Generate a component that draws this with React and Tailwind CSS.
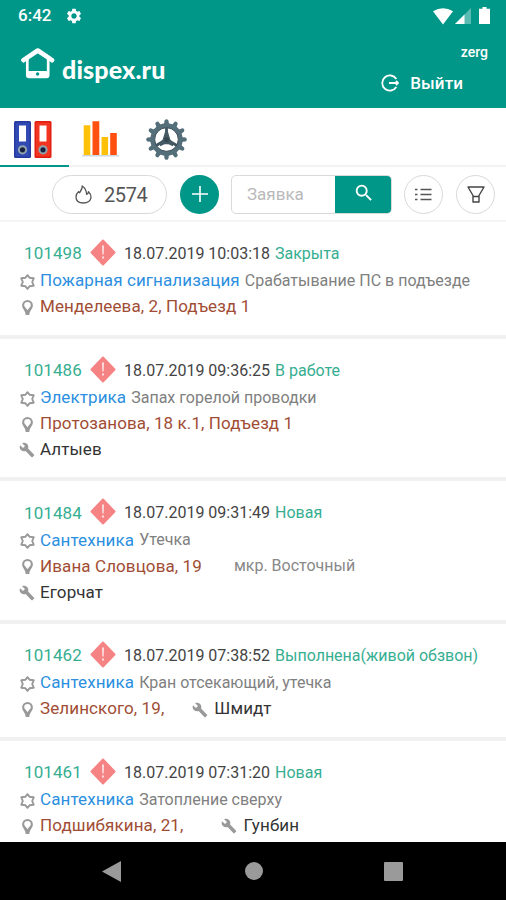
import { MdSettings, MdSearch, MdBuild } from "react-icons/md";

const requests = [
  {
    id: "101498",
    date: "18.07.2019 10:03:18",
    status: "Закрыта",
    type: "Пожарная сигнализация",
    text: "Срабатывание ПС в подъезде",
    address: "Менделеева, 2, Подъезд 1",
  },
  {
    id: "101486",
    date: "18.07.2019 09:36:25",
    status: "В работе",
    type: "Электрика",
    text: "Запах горелой проводки",
    address: "Протозанова, 18 к.1, Подъезд 1",
    worker: "Алтыев",
  },
  {
    id: "101484",
    date: "18.07.2019 09:31:49",
    status: "Новая",
    type: "Сантехника",
    text: "Утечка",
    address: "Ивана Словцова, 19",
    district: "мкр. Восточный",
    worker: "Егорчат",
  },
  {
    id: "101462",
    date: "18.07.2019 07:38:52",
    status: "Выполнена(живой обзвон)",
    type: "Сантехника",
    text: "Кран отсекающий, утечка",
    address: "Зелинского, 19,",
    inlineWorker: "Шмидт",
    gap: "ml-[28px]",
  },
  {
    id: "101461",
    date: "18.07.2019 07:31:20",
    status: "Новая",
    type: "Сантехника",
    text: "Затопление сверху",
    address: "Подшибякина, 21,",
    inlineWorker: "Гунбин",
    gap: "ml-[38px]",
  },
];

function StatusBar() {
  return (
    <div className="flex h-8 items-center pl-[18px] pr-[16px]">
      <span className="text-[17px] font-medium">6:42</span>
      <MdSettings className="ml-[14px] -mt-px size-[18px]" />
      <svg className="ml-auto h-[17px] w-[20px]" viewBox="0 0 20 17" fill="currentColor">
        <path d="M0 3.2Q10-2.6 20 3.2L10 16.5Z" />
      </svg>
      <svg className="ml-[2px] h-[16px] w-[16px]" viewBox="0 0 16 16">
        <path d="M16 0V16H0Z" fill="#fff" opacity=".35" />
        <path d="M9.5 6.5V16H0Z" fill="#fff" />
      </svg>
      <svg className="ml-[8px] -mt-px h-[17px] w-[11px]" viewBox="0 0 11 17" fill="currentColor">
        <path d="M3.5 0h4v1.7H11V17H0V1.7h3.5z" />
      </svg>
    </div>
  );
}

function Header() {
  return (
    <div className="flex grow justify-between pl-[21px] pr-[18px]">
      <div className="flex items-start pt-[15px]">
        <svg className="h-[32px] w-[34px]" viewBox="0 0 34 32" fill="none" stroke="#fff">
          <path d="M2.5 13.2 16.8 3.5 31 13.2" strokeWidth="4.6" strokeLinecap="round" strokeLinejoin="round" />
          <path d="M6.3 12V28.2a1.6 1.6 0 0 0 1.6 1.6H25.6a1.6 1.6 0 0 0 1.6-1.6V12" strokeWidth="2.7" />
          <path d="M6 24H27.5V30H6z" fill="#fff" stroke="none" />
          <circle cx="16.6" cy="27" r="1.7" fill="#009788" stroke="none" />
        </svg>
        <span className="ml-[7px] mt-[5px] font-['Lato'] text-[25px] font-black leading-[34px] tracking-[0.15px]">
          dispex.ru
        </span>
      </div>
      <div className="flex flex-col items-end pt-[11px]">
        <span className="text-[14px] leading-[18px] font-medium">zerg</span>
        <div className="mr-[25px] mt-[12px] flex items-center text-[17px] leading-[20px] font-medium tracking-[0.1px]">
          <svg className="mr-[11px] -mt-px size-[18px]" viewBox="0 0 18 18" fill="none" stroke="#fff" strokeWidth="1.8">
            <path d="M15.3 5A7.6 7.6 0 1 0 15.3 13M8 9H17.5M15 7 17 9 15 11" />
          </svg>
          Выйти
        </div>
      </div>
    </div>
  );
}

function Binder({ dark, light }) {
  return (
    <g>
      <rect width="17" height="37" rx="1.5" fill={dark} />
      <rect x="1.5" y="1.5" width="14" height="34" fill={light} />
      <rect x="5" y="4.5" width="7" height="16" fill="#fff" />
      <circle cx="8.5" cy="28.8" r="4.6" fill="#90a4ae" />
      <circle cx="8.5" cy="28.8" r="2.6" fill="#17213f" />
    </g>
  );
}

const teeth = [0, 30, 60, 90, 120, 150, 180, 210, 240, 270, 300, 330];

function Tabs() {
  return (
    <div className="flex h-[59px] border-b-2 border-[#f3f3f3]">
      <div className="-mb-[2px] flex w-[69px] shrink-0 border-b-2 border-[#009788] pl-[14px] pt-[13px]">
        <svg className="h-[37px] w-[38px]" viewBox="0 0 38 37">
          <Binder dark="#263ba0" light="#3049b3" />
          <g transform="translate(20.5 0)">
            <Binder dark="#e11f10" light="#f13520" />
          </g>
        </svg>
      </div>
      <svg className="ml-[13px] mt-[13px] h-[37px] w-[38px]" viewBox="0 0 38 37">
        <path d="M1.7 4.3h6.6V34H1.7zM19.5 16h6.6v18h-6.6z" fill="#ffc107" />
        <path d="M10.5.3h6.8V34h-6.8zM28.2 12h6.6v22h-6.6z" fill="#ff5010" />
        <path d="M0 34h37v1.5H0z" fill="#cfd8dc" />
      </svg>
      <svg className="ml-[26px] mt-[11px] size-[41px]" viewBox="-20.5 -20.5 41 41">
        {teeth.map((angle) => (
          <g key={angle} transform={`rotate(${angle})`} fill="#546e7a">
            <path d="M-2.6-15-1.8-19H1.8L2.6-15Z" />
            <circle cy="-18.4" r="1.9" />
          </g>
        ))}
        <circle r="14" fill="none" stroke="#546e7a" strokeWidth="4.4" />
        <circle r="11.8" fill="none" stroke="#3b4f59" strokeWidth="1" />
        <path d="M0 0V-12M0 0 10.4 6M0 0-10.4 6" stroke="#3f545f" strokeWidth="2.8" />
        <path d="M-1.4-8-3.8 0-7.5 4.2-6.2 6.8-2 4.8H2L6.2 6.8 7.5 4.2 3.8 0 1.4-8Z" fill="#455a64" />
        <circle r="2.5" fill="#37474f" />
      </svg>
    </div>
  );
}

function Toolbar() {
  return (
    <div className="flex h-[55px] items-center border-b-2 border-[#f5f5f5] pl-[52px] pt-px">
      <div className="flex h-[39px] w-[115px] items-center rounded-full border border-[#d9d9d9] pl-[22px] text-[20px] tracking-[-0.4px] text-[#555]">
        <svg className="mr-[12px] h-[19px] w-[17px]" viewBox="0 0 17 19" fill="none" stroke="#555" strokeWidth="1.3" strokeLinejoin="round">
          <path d="M7.2 1C7.5 4.5 5.5 6 4.5 7.8 4 7.5 3.8 7 3.7 6.6 2 8 1 10 1 12 1 15.8 4 18 8.3 18S16 15.7 16 12.3C16 10 15 8 13.5 6.7 13.4 8.3 12.7 9 11.6 9.4 11.6 6 10 3 7.2 1Z" />
        </svg>
        <span className="pt-[2px]">2574</span>
      </div>
      <div className="ml-[13px] flex size-[39px] items-center justify-center rounded-full bg-[#009788]">
        <svg className="size-4" viewBox="0 0 16 16" stroke="#fff" strokeWidth="1.6">
          <path d="M8 0V16M0 8H16" />
        </svg>
      </div>
      <div className="ml-[12px] flex h-[39px] w-[161px] overflow-hidden rounded-[5px] border border-[#d9d9d9]">
        <span className="grow pl-[15px] text-[17px] leading-[37px] text-[#b9b9b9]">Заявка</span>
        <div className="-my-px -mr-px flex w-[57px] items-center justify-center bg-[#009788]">
          <MdSearch className="-mt-[2px] size-[22px] text-white" />
        </div>
      </div>
      <div className="ml-[12px] flex size-[39px] items-center justify-center rounded-full border border-[#d9d9d9]">
        <svg className="mt-px h-[14px] w-[17px]" viewBox="0 0 17 14" stroke="#555" strokeWidth="1.4">
          <path d="M5.5 1.5H16.5M5.5 6.5H16.5M5.5 11.5H16.5M0 1.5H2.5M0 6.5H2.5M0 11.5H2.5" />
        </svg>
      </div>
      <div className="ml-[13px] flex size-[39px] items-center justify-center rounded-full border border-[#d9d9d9]">
        <svg className="h-[17px] w-[18px]" viewBox="0 0 18 17" fill="none" stroke="#444" strokeWidth="1.4" strokeLinejoin="round">
          <path d="M1 1H17L12 9.5V16H6V9.5ZM6 10.5H12" />
        </svg>
      </div>
    </div>
  );
}

function Priority() {
  return (
    <svg className="ml-[8px] -mt-[3px] h-[27px] w-[26px] shrink-0" viewBox="0 0 26 27">
      <path d="M13 1.5 24.5 13.5 13 25.5 1.5 13.5Z" fill="#f58384" stroke="#f58384" strokeWidth="2" strokeLinejoin="round" />
      <path d="M12 6.5h2l-.3 9h-1.4zM12 17.5h2v2h-2z" fill="#fde0e0" />
    </svg>
  );
}

function Gear() {
  return (
    <svg className="mr-[5px] mt-[2px] h-[16px] w-[15px] shrink-0" viewBox="0 0 15 16">
      <path
        fill="none"
        stroke="#999"
        strokeWidth="1.9"
        strokeLinejoin="round"
        d="M7.5 1.2 9.5 3.7 13.7 4.3 12.2 8 13.7 11.7 9.5 12.3 7.5 14.8 5.5 12.3 1.3 11.7 2.8 8 1.3 4.3 5.5 3.7Z"
      />
    </svg>
  );
}

function Pin() {
  return (
    <svg className="ml-[2px] mr-[7px] mt-px h-[15px] w-[11px] shrink-0" viewBox="0 0 11 15">
      <path
        fillRule="evenodd"
        fill="#999"
        d="M5.5 0A5.4 5.4 0 0 0 .1 5.4C.1 8.4 3.5 10.5 3.7 15H7.3C7.5 10.5 10.9 8.4 10.9 5.4A5.4 5.4 0 0 0 5.5 0ZM5.5 2A3.3 3.3 0 0 1 8.8 5.3C8.8 7.2 6.8 8 5.5 10.2 4.2 8 2.2 7.2 2.2 5.3A3.3 3.3 0 0 1 5.5 2Z"
      />
    </svg>
  );
}

function Request({ item }) {
  return (
    <div className="border-b-4 border-[#f1f1f1] pb-[14.7px] pl-[20px] pt-[18px] text-[16px] whitespace-nowrap">
      <div className="flex h-7 items-center pl-[4px]">
        <span className="w-[58px] text-[17px] tracking-[0.1px] text-[#36ae91]">{item.id}</span>
        <Priority />
        <span className="ml-[8px] w-[147px] text-[#444]">{item.date}</span>
        <span className="ml-[4px] text-[#36ae91]">{item.status}</span>
      </div>
      <div className="flex h-[26px] items-center">
        <Gear />
        <span className="text-[17px] tracking-[0.1px] text-[#2c8fe0]">{item.type}</span>
        <span className="ml-[5px] text-[#808080]">{item.text}</span>
      </div>
      <div className="flex h-[26px] items-center">
        <Pin />
        <span className="text-[17px] tracking-[0.1px] text-[#a14d35]">{item.address}</span>
        {item.district && <span className="ml-[32px] text-[#888]">{item.district}</span>}
        {item.inlineWorker && (
          <div className={`flex items-center ${item.gap}`}>
            <MdBuild className="mr-[6px] mt-px size-4 text-[#999]" />
            <span className="text-[17px] tracking-[0.1px] text-[#333]">{item.inlineWorker}</span>
          </div>
        )}
      </div>
      {item.worker && (
        <div className="flex h-[26px] items-center">
          <MdBuild className="-ml-px mr-[5px] mt-px size-4 text-[#999]" />
          <span className="text-[17px] tracking-[0.1px] text-[#333]">{item.worker}</span>
        </div>
      )}
    </div>
  );
}

function NavBar() {
  return (
    <div className="flex h-[58px] shrink-0 items-center bg-black pl-[102px] text-[#9a9a9a]">
      <svg className="h-[21px] w-[19px]" viewBox="0 0 19 21" fill="currentColor">
        <path d="M0 10.5 19 0V21Z" />
      </svg>
      <div className="ml-[124px] size-[18px] rounded-full bg-[#9a9a9a]" />
      <div className="ml-[121px] size-[19px] rounded-[1px] bg-[#9a9a9a]" />
    </div>
  );
}

export default function App() {
  return (
    <div className="flex h-[900px] w-[506px] flex-col overflow-hidden bg-white font-['Roboto',sans-serif]">
      <div className="flex h-[108px] shrink-0 flex-col bg-[#009788] text-white">
        <StatusBar />
        <Header />
      </div>
      <div className="min-h-0 grow overflow-hidden">
        <Tabs />
        <Toolbar />
        {requests.map((item) => (
          <Request key={item.id} item={item} />
        ))}
      </div>
      <NavBar />
    </div>
  );
}
